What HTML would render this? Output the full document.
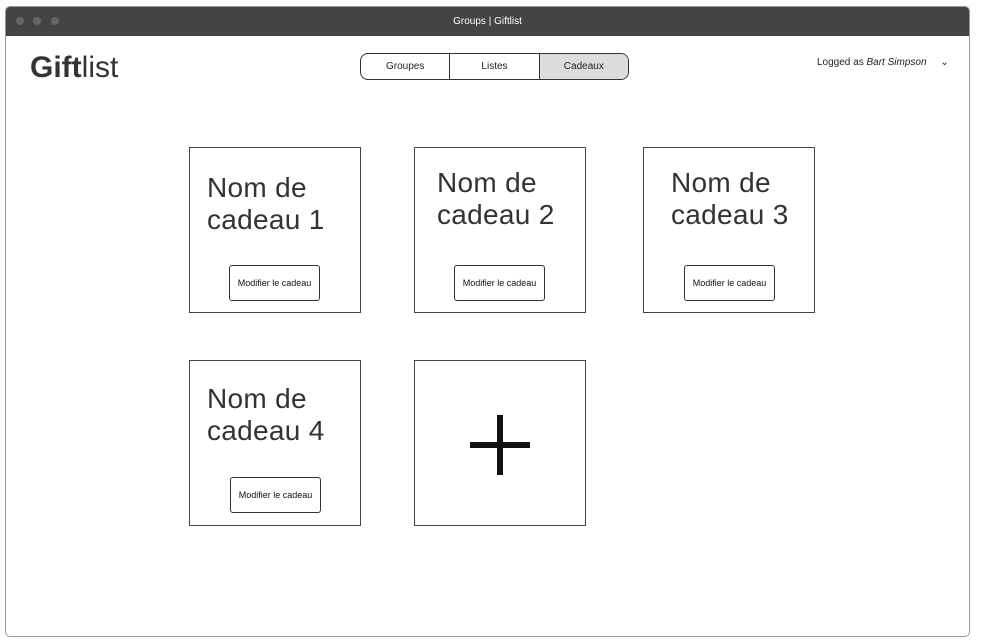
<!DOCTYPE html>
<html><head><meta charset="utf-8"><style>
*{margin:0;padding:0;box-sizing:border-box}
body{width:981px;height:643px;background:#fff;position:relative;overflow:hidden;font-family:"Liberation Sans",sans-serif;color:#333}
.win{position:absolute;left:5px;top:6px;width:965px;height:631px;border:1px solid #999;border-radius:5px;overflow:hidden;background:#fff}
.bar{height:29px;background:#444;color:#fff;font-size:10px;text-align:center;line-height:29px}
.dot{position:absolute;top:10px;width:8px;height:8px;border-radius:50%;background:#666}
.a{position:absolute}
.logo{left:30px;top:51px;font-size:30px;color:#333}
.nav{left:360px;top:53px;width:269px;height:27px;border:1px solid #333;border-radius:8px;overflow:hidden;display:flex;font-size:10px}
.nav div{flex:1;text-align:center;line-height:25px;color:#222}
.nav div+div{border-left:1px solid #333}
.user{left:817px;top:57px;font-size:10px;color:#222}
.card{position:absolute;width:172px;height:166px;border:1px solid #444}
.t{position:absolute;font-size:28px;line-height:32px;color:#333;letter-spacing:0.3px}
.btn{position:absolute;width:91px;height:36px;border:1px solid #333;border-radius:3px;font-size:9px;text-align:center;line-height:34px;color:#111}
</style></head><body>
<div class="win"><div class="bar">Groups | Giftlist</div>
<div class="dot" style="left:10px"></div><div class="dot" style="left:27px"></div><div class="dot" style="left:45px"></div></div>
<div class="a logo"><b style="font-weight:600">Gift</b>list</div>
<div class="a nav"><div>Groupes</div><div>Listes</div><div style="background:#ddd">Cadeaux</div></div>
<div class="a user">Logged as <i>Bart Simpson</i> &nbsp;&nbsp;&nbsp;&nbsp;⌄</div>

<div class="card" style="left:189px;top:147px"></div>
<div class="t" style="left:207px;top:172px">Nom de<br>cadeau 1</div>
<div class="btn" style="left:229px;top:265px">Modifier le cadeau</div>

<div class="card" style="left:414px;top:147px"></div>
<div class="t" style="left:437px;top:167px">Nom de<br>cadeau 2</div>
<div class="btn" style="left:454px;top:265px">Modifier le cadeau</div>

<div class="card" style="left:643px;top:147px"></div>
<div class="t" style="left:671px;top:167px">Nom de<br>cadeau 3</div>
<div class="btn" style="left:684px;top:265px">Modifier le cadeau</div>

<div class="card" style="left:189px;top:360px"></div>
<div class="t" style="left:207px;top:383px">Nom de<br>cadeau 4</div>
<div class="btn" style="left:230px;top:477px">Modifier le cadeau</div>

<div class="card" style="left:414px;top:360px"></div>
<div class="a" style="left:470px;top:442px;width:60px;height:6px;background:#111"></div>
<div class="a" style="left:497px;top:415px;width:6px;height:60px;background:#111"></div>
</body></html>
